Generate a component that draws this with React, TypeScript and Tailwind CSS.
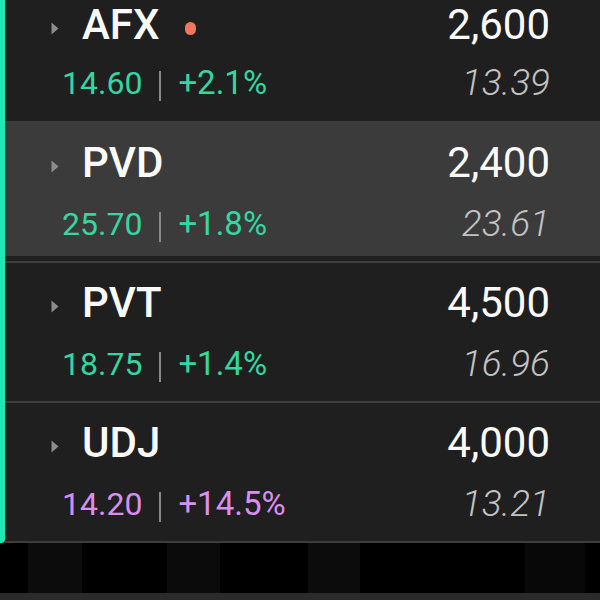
import React from "react";

type Row = {
  name: string;
  price: string;
  last: string;
  pct: string;
  ref: string;
  tone: "green" | "purple";
  dot?: boolean;
  active?: boolean;
};

const rows: Row[] = [
  { name: "AFX", price: "2,600", last: "14.60", pct: "+2.1%", ref: "13.39", tone: "green", dot: true },
  { name: "PVD", price: "2,400", last: "25.70", pct: "+1.8%", ref: "23.61", tone: "green", active: true },
  { name: "PVT", price: "4,500", last: "18.75", pct: "+1.4%", ref: "16.96", tone: "green" },
  { name: "UDJ", price: "4,000", last: "14.20", pct: "+14.5%", ref: "13.21", tone: "purple" },
];

function Caret() {
  return (
    <svg width="10" height="15" viewBox="0 0 10 15" className="mt-[6px] shrink-0">
      <path d="M1.5 1.5 L8.5 7.5 L1.5 13.5 Z" fill="#8c8c8c" />
    </svg>
  );
}

function StockRow({ row, first }: { row: Row; first?: boolean }) {
  const color = row.tone === "green" ? "text-[#35d6a0]" : "text-[#dc8eee]";
  // the first row is partly scrolled off the top of the list
  const box = first ? "h-[116px] pt-[3px]" : "h-[133px] pt-[15px]";
  const top = first ? "h-[44px]" : "h-[50px]";
  const gap = first ? "mt-[16px]" : "mt-[16px]";
  return (
    <div className="border-b-2 border-[#3d3d3d] pb-[5px]">
      <div className={`${box} pl-[45px] pr-[50px] ${row.active ? "bg-[#3b3b3b]" : ""}`}>
        <div className={`flex ${top} items-center`}>
          <Caret />
          <span className="ml-[22px] text-[42px] font-medium leading-[44px] text-[#fafafa]">{row.name}</span>
          {row.dot && <span className="ml-[25px] mt-[6px] h-[13px] w-[11px] rounded-full bg-[#f2755f]" />}
          <span className="ml-auto text-[42px] leading-[44px] text-[#fafafa]">{row.price}</span>
        </div>
        <div className={`${gap} flex h-[40px] items-center pl-[12px]`}>
          <span className={`text-[32px] leading-[40px] ${color}`}>{row.last}</span>
          <span className="mx-[17px] mt-[6px] h-[30px] w-[2px] bg-[#8a8a8a]" />
          <span className={`text-[33px] leading-[40px] ${color}`}>{row.pct}</span>
          <span className="ml-auto text-[37px] font-light italic leading-[40px] text-[#c2c2c2]">{row.ref}</span>
        </div>
      </div>
    </div>
  );
}

export default function App() {
  return (
    <div
      className="flex h-[600px] w-[600px] flex-col overflow-hidden bg-black"
      style={{ fontFamily: "Roboto, 'Noto Sans', sans-serif" }}
    >
      <div className="flex bg-[#1f1f1f]">
        <div className="w-[5px] shrink-0 rounded-br-[4px] bg-[#1ee8b4]" />
        <div className="flex-1">
          {rows.map((r, i) => (
            <StockRow key={r.name} row={r} first={i === 0} />
          ))}
        </div>
      </div>
      <div className="flex flex-1 bg-black">
        <div className="ml-[28px] w-[54px] bg-[#0c0c0c]" />
        <div className="ml-[85px] w-[53px] bg-[#0b0b0b]" />
        <div className="ml-[88px] w-[52px] bg-[#0c0c0c]" />
        <div className="ml-[165px] w-[60px] bg-[#080808]" />
      </div>
      <div className="h-[7px] bg-[#2b2b2b]" />
    </div>
  );
}
